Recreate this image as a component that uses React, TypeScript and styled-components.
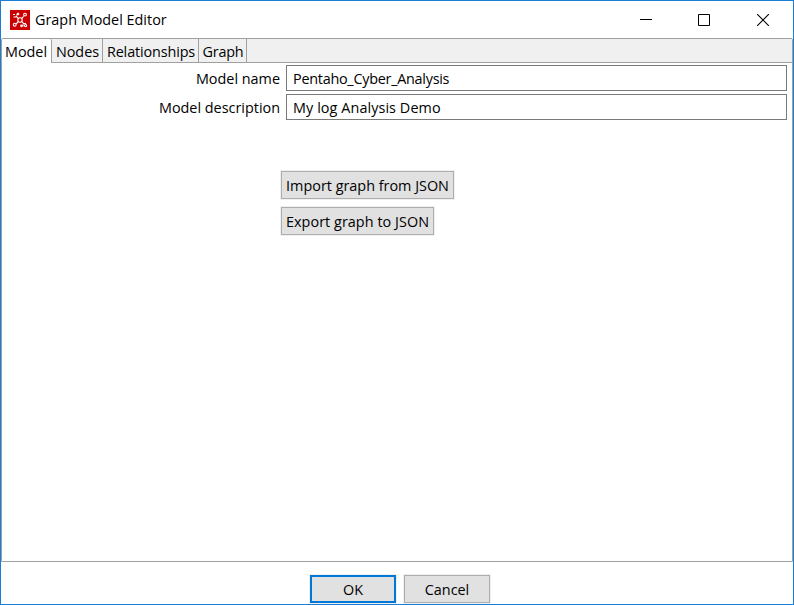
import React from "react";
import styled, { createGlobalStyle } from "styled-components";

const Global = createGlobalStyle`
  * { box-sizing: border-box; }
  body { margin: 0; background: #fff; }
`;

const Window = styled.div`
  width: 794px;
  height: 605px;
  border: 1px solid #1a7fd4;
  background: #fff;
  display: flex;
  flex-direction: column;
  font: 14.4px/20px "Open Sans", "Noto Sans", sans-serif;
  color: #000;
  overflow: hidden;
`;

const Label = styled.span<{ $ls?: number }>`
  white-space: pre;
  letter-spacing: ${(p) => p.$ls ?? 0}px;
`;

const TitleBar = styled.header`
  height: 37px;
  flex: none;
  display: flex;
  align-items: center;
  padding: 0 1px 0 9px;
`;

const Title = styled.h1`
  margin: 0 auto 0 5px;
  font: inherit;
`;

const WindowControls = styled.div`
  display: flex;
`;

const ControlButton = styled.button`
  width: 58.5px;
  height: 36px;
  padding: 0;
  border: 0;
  background: none;
  display: flex;
  align-items: center;
  justify-content: center;
`;

const TabPanel = styled.main`
  height: 524px;
  flex: none;
  border: 1px solid #a0a0a0;
  border-radius: 2px 2px 0 0;
  display: flex;
  flex-direction: column;
`;

const TabStrip = styled.nav`
  height: 24px;
  flex: none;
  display: flex;
  background: #f0f0f0;
  border-bottom: 1px solid #a0a0a0;
`;

const Tab = styled.button<{ $w: number; $active?: boolean }>`
  width: ${(p) => p.$w}px;
  height: ${(p) => (p.$active ? 24 : 23)}px;
  padding: ${(p) => (p.$active ? "2px 1px 0 0" : "2px 0 0 1px")};
  border: 0;
  border-right: 1px solid #a0a0a0;
  border-top-right-radius: ${(p) => (p.$active ? 2 : 0)}px;
  background: ${(p) => (p.$active ? "#fff" : "#f0f0f0")};
  font: inherit;
  color: inherit;
  display: flex;
  justify-content: center;
  align-items: center;
`;

const Form = styled.div`
  display: grid;
  grid-template-columns: 278px 501px;
  grid-auto-rows: 26px;
  column-gap: 6px;
  row-gap: 3px;
  padding-top: 2px;
`;

const FieldLabel = styled.label`
  text-align: right;
  padding-top: 4px;
`;

const Field = styled.input<{ $ls?: number }>`
  width: 100%;
  height: 26px;
  border: 1px solid #7a7a7a;
  padding: 1px 6px 0;
  background: #fff;
  font: inherit;
  color: inherit;
  outline: none;
  letter-spacing: ${(p) => p.$ls ?? 0}px;
`;

const Actions = styled.div`
  display: flex;
  flex-direction: column;
  align-items: flex-start;
  gap: 8px;
  padding: 51px 0 0 279px;
`;

const PushButton = styled.button<{ $w: number; $primary?: boolean }>`
  width: ${(p) => p.$w}px;
  height: 28px;
  padding: 2px 0 0;
  border: ${(p) => (p.$primary ? "2px solid #0078d7" : "1px solid #adadad")};
  box-shadow: 0 0 0 1px #f0f0f0;
  background: #e1e1e1;
  font: inherit;
  color: inherit;
  display: flex;
  justify-content: center;
  align-items: center;
`;

const Footer = styled.footer`
  display: flex;
  gap: 8px;
  padding: 13px 0 0 309px;
`;

const AppIcon = () => (
  <svg width="20" height="20" viewBox="0 0 20 20">
    <rect width="20" height="20" fill="#cc0000" />
    <g fill="none" stroke="#fff" strokeWidth="1.1">
      <circle cx="10" cy="10" r="2.2" />
      <path d="M8.3 8.3 5.8 5.8M11.7 8.3 13.7 6.3M8.3 11.7 6 14M11.7 11.7 14.2 14.2" />
      <path d="M3 4.5h2M3.5 7h3M7 5.5V4M13 14.5v2M13 13.5h3" />
      <circle cx="8" cy="4" r=".8" />
      <circle cx="15" cy="4.6" r="1.4" />
      <circle cx="4.7" cy="14.7" r="1.4" />
      <circle cx="11.5" cy="15.8" r=".8" />
      <circle cx="15.6" cy="15.6" r="1.1" />
    </g>
  </svg>
);

export default function App() {
  return (
    <>
      <Global />
      <Window>
        <TitleBar>
          <AppIcon />
          <Title><Label>Graph Model Editor</Label></Title>
          <WindowControls>
            <ControlButton aria-label="Minimize">
              <svg width="12" height="12"><path d="M0 5.5h12" stroke="#000" /></svg>
            </ControlButton>
            <ControlButton aria-label="Maximize">
              <svg width="12" height="12"><path d="M.5.5h11v11H.5z" fill="none" stroke="#000" /></svg>
            </ControlButton>
            <ControlButton aria-label="Close">
              <svg width="12" height="12"><path d="M0 0 12 12M12 0 0 12" stroke="#000" strokeWidth="1.1" /></svg>
            </ControlButton>
          </WindowControls>
        </TitleBar>
        <TabPanel>
          <TabStrip>
            <Tab $w={50} $active><Label>Model</Label></Tab>
            <Tab $w={51}><Label>Nodes</Label></Tab>
            <Tab $w={96}><Label $ls={-0.13}>Relationships</Label></Tab>
            <Tab $w={48}><Label $ls={-0.2}>Graph</Label></Tab>
          </TabStrip>
          <Form>
            <FieldLabel htmlFor="name"><Label>Model name</Label></FieldLabel>
            <Field id="name" $ls={-0.26} defaultValue="Pentaho_Cyber_Analysis" />
            <FieldLabel htmlFor="description"><Label>Model description</Label></FieldLabel>
            <Field id="description" $ls={0.08} defaultValue="My log Analysis Demo" />
          </Form>
          <Actions>
            <PushButton $w={173}><Label>Import graph from JSON</Label></PushButton>
            <PushButton $w={153}><Label $ls={0.05}>Export graph to JSON</Label></PushButton>
          </Actions>
        </TabPanel>
        <Footer>
          <PushButton $w={86} $primary><Label>OK</Label></PushButton>
          <PushButton $w={86}><Label>Cancel</Label></PushButton>
        </Footer>
      </Window>
    </>
  );
}
